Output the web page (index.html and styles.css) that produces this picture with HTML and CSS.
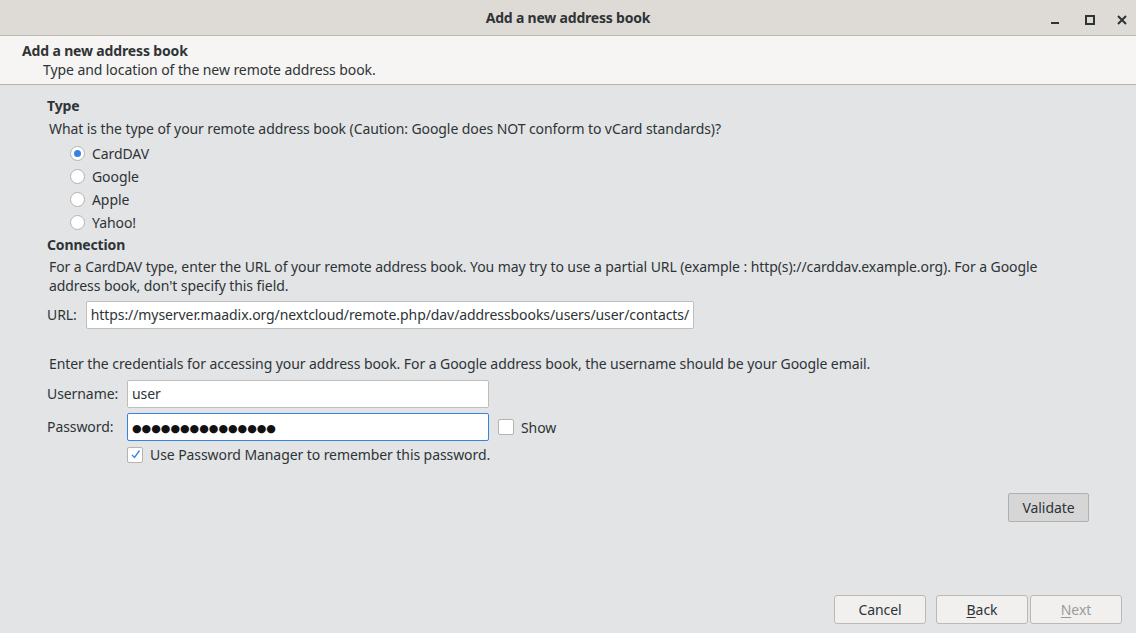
FILE: index.html
```html
<!DOCTYPE html>
<html>
<head>
<meta charset="utf-8">
<link rel="stylesheet" href="styles.css">
</head>
<body>
<div class="window">
  <div class="titlebar">
    <div class="title">Add a new address book</div>
    <div class="controls">
      <span class="ctl"><svg width="12" height="12" viewBox="0 0 12 12"><rect x="1" y="8" width="8" height="2" fill="#2e3436"/></svg></span>
      <span class="ctl"><svg width="12" height="12" viewBox="0 0 12 12"><rect x="2" y="2" width="8" height="8" fill="none" stroke="#2e3436" stroke-width="2"/></svg></span>
      <span class="ctl"><svg width="12" height="12" viewBox="0 0 12 12"><path d="M2 2 L10 10 M10 2 L2 10" stroke="#2e3436" stroke-width="2"/></svg></span>
    </div>
  </div>
  <div class="header">
    <div class="h-title">Add a new address book</div>
    <div class="h-sub">Type and location of the new remote address book.</div>
  </div>
  <div class="content">
    <div class="section-title">Type</div>
    <div class="para">What is the type of your remote address book (Caution: Google does NOT conform to vCard standards)?</div>
    <div class="radios">
      <div class="radio-row"><span class="radio checked"></span><span>CardDAV</span></div>
      <div class="radio-row"><span class="radio"></span><span>Google</span></div>
      <div class="radio-row"><span class="radio"></span><span>Apple</span></div>
      <div class="radio-row"><span class="radio"></span><span>Yahoo!</span></div>
    </div>
    <div class="section-title conn">Connection</div>
    <div class="para wrap">For a CardDAV type, enter the URL of your remote address book. You may try to use a partial URL (example : http(s)://carddav.example.org). For a Google address book, don't specify this field.</div>
    <div class="url-row">
      <span class="lbl">URL:</span>
      <div class="input url">https://myserver.maadix.org/nextcloud/remote.php/dav/addressbooks/users/user/contacts/</div>
    </div>
    <div class="para cred">Enter the credentials for accessing your address book. For a Google address book, the username should be your Google email.</div>
    <div class="form-grid">
      <span class="lbl">Username:</span>
      <div class="input field">user</div>
      <span></span>
      <span class="lbl">Password:</span>
      <div class="input field focus"><span class="dots">●●●●●●●●●●●●●●●</span></div>
      <div class="check-row"><span class="check"></span><span>Show</span></div>
      <span></span>
      <div class="check-row pm"><span class="check on"><svg width="11" height="11" viewBox="0 0 11 11"><path d="M2 6 L4.5 8.5 L9.5 1.5" fill="none" stroke="#3584e4" stroke-width="1.3"/></svg></span><span>Use Password Manager to remember this password.</span></div>
    </div>
    <div class="validate-row"><button class="btn validate">Validate</button></div>
  </div>
  <div class="footer">
    <button class="btn foot">Cancel</button>
    <div class="nav">
      <button class="btn foot"><u>B</u>ack</button>
      <button class="btn foot disabled"><u>N</u>ext</button>
    </div>
  </div>
</div>
</body>
</html>
```
FILE: styles.css
```css
* { box-sizing: border-box; }
html, body { margin: 0; padding: 0; }
body {
  width: 1136px; height: 633px; overflow: hidden;
  font-family: "Noto Sans", "Open Sans", sans-serif;
  font-size: 14px; color: #2e3436; letter-spacing: -0.08px;
  background: #e3e4e6;
}
.window { display: flex; flex-direction: column; height: 633px; }
.titlebar {
  height: 36px; background: #dedad6; border-bottom: 1px solid #bcb8b3;
  display: flex; align-items: center; justify-content: center; position: relative;
}
.title { font-weight: bold; font-size: 14px; color: #2e3436; letter-spacing: -0.2px; }
.controls { position: absolute; right: 8px; top: 11px; display: flex; gap: 20px; }
.ctl { width: 12px; height: 12px; display: block; }
.controls .ctl:nth-child(1) { margin-right: 2px; }
.header {
  height: 49px; background: #f6f5f4; border-bottom: 1px solid #b5b3b0;
  padding: 5px 0 0 22px;
}
.h-title { font-weight: bold; line-height: 19px; letter-spacing: -0.15px; }
.h-sub { padding-left: 21px; line-height: 19px; }
.content { padding: 11px 47px 0 47px; }
.section-title { font-weight: bold; line-height: 20px; letter-spacing: -0.15px; }
.para { padding-left: 2px; line-height: 19px; margin-top: 3px; }
.para.wrap { padding-right: 40px; margin-top: 2px; }
.radios { padding-left: 23px; margin-top: 4px; display: flex; flex-direction: column; }
.radio-row { display: flex; align-items: center; height: 23px; gap: 7px; }
.radio {
  width: 15px; height: 15px; border-radius: 50%; background: #fff;
  border: 1px solid #b5b3b0; display: flex; align-items: center; justify-content: center;
}
.radio.checked::after { content: ""; width: 7px; height: 7px; border-radius: 50%; background: #3584e4; }
.section-title.conn { margin-top: 1px; }
.url-row { display: flex; align-items: center; gap: 9px; margin-top: 6px; }
.lbl { line-height: 28px; }
.input {
  height: 28px; background: #fff; border: 1px solid #c0bebb; border-radius: 2px;
  padding: 0 4px; line-height: 26px; white-space: nowrap; overflow: hidden;
}
.input.url { width: 608px; }
.para.cred { margin-top: 25px; }
.form-grid {
  display: grid; grid-template-columns: 80px 362px auto; row-gap: 5px;
  align-items: center; margin-top: 7px;
}
.input.field { width: 362px; }
.input.focus { border-color: #3584e4; }
.dots { color: #111; font-family: "DejaVu Sans", sans-serif; font-size: 11px; letter-spacing: 0; }
.check-row { display: flex; align-items: center; gap: 7px; padding-left: 9px; }
.check {
  width: 16px; height: 16px; background: #fff; border: 1px solid #b5b3b0; border-radius: 2px;
  display: flex; align-items: center; justify-content: center;
}
.check-row.pm { grid-column: 2 / 4; padding-left: 0; margin-top: -1px; }
.validate-row { display: flex; justify-content: flex-end; margin-top: 29px; }
.btn {
  font-family: inherit; font-size: 14px; color: #2e3436; letter-spacing: -0.08px;
  height: 29px; border-radius: 3px; border: 1px solid #bcb8b3;
  background: #f1f0ef; padding: 0;
}
.btn.validate { width: 81px; background: #d6d6d6; border-color: #b0b0b0; border-radius: 2px; }
.footer {
  margin-top: auto; display: flex; justify-content: flex-end; gap: 10px;
  padding: 0 14px 9px 0;
}
.btn.foot { width: 92px; }
.nav { display: flex; gap: 2px; }
.btn.disabled { color: #9a9c9c; }
u { text-decoration-thickness: 1px; text-underline-offset: 2px; }
```
